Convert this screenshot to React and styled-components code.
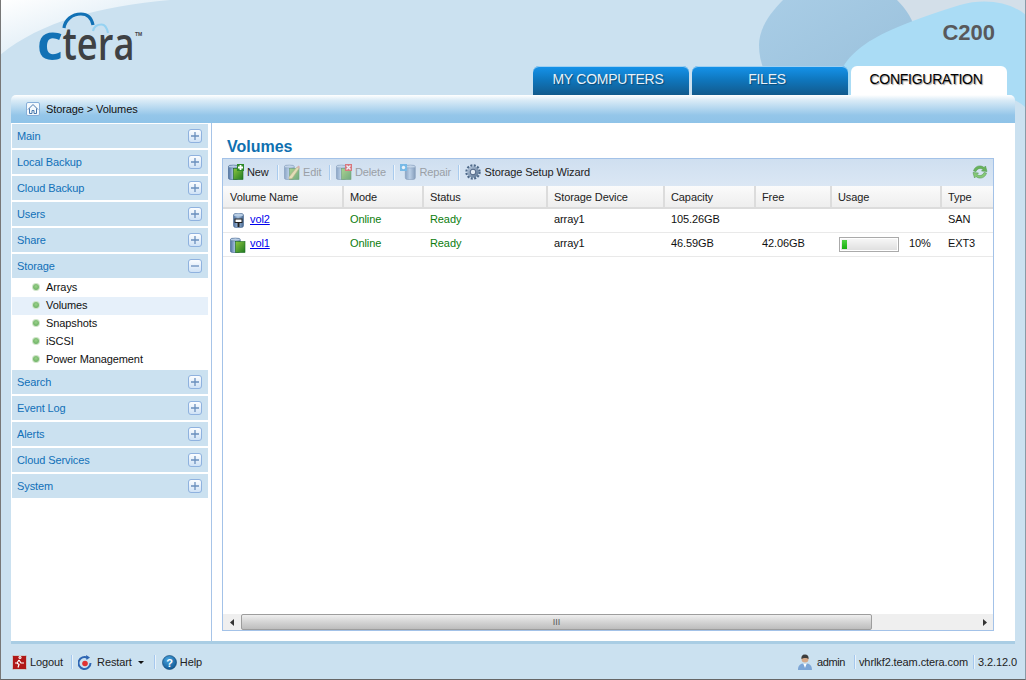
import React from "react";
import styled, { createGlobalStyle } from "styled-components";

const Global = createGlobalStyle`
  html, body { margin: 0; padding: 0; height: 100%; overflow: hidden; }
  body { font-family: "Liberation Sans", Arial, sans-serif; font-size: 11px; letter-spacing: -0.1px; color: #111; }
  * { box-sizing: border-box; }
`;

const Shell = styled.div`
  position: relative; width: 1026px; height: 680px; overflow: hidden;
  background: #cbe1f0;
  border-left: 1px solid #777; border-right: 1px solid #8a9aa6; border-bottom: 1px solid #666;
  display: flex; flex-direction: column;
`;
const Backdrop = styled.svg`position: absolute; left: -1px; top: 0; width: 1026px; height: 135px;`;
const Header = styled.header`
  position: relative; height: 95px; flex: none;
  padding: 0 7px 0 532px;
  display: flex; align-items: flex-end; gap: 3px;
`;
const Logo = styled.svg`position: absolute; left: 29px; top: 0; width: 121px; height: 76px; letter-spacing: 0;`;
const Model = styled.div`
  position: absolute; right: 30px; top: 20px; letter-spacing: 0;
  font-size: 22px; line-height: 26px; font-weight: 700; color: #58595b;
`;
const Tab = styled.div`
  width: 156px; height: 29px; border-radius: 6px 6px 0 0;
  padding: 5px 6px 0 0; text-align: center; font-size: 14px; line-height: 17px; letter-spacing: -0.25px;
  margin-right: ${p => (p.$last ? "8px" : "0")};
  color: ${p => (p.$active ? "#000" : "#e8f2fa")};
  background: ${p => (p.$active ? "#fff" : "linear-gradient(#1594ec, #0f75bb 50%, #125a8c)")};
  box-shadow: ${p => (p.$active ? "none" : "inset 0 1px 0 #9fd0f2")};
  text-shadow: ${p => (p.$active ? "1px 1px 1px #999" : "1px 1px 1px #0b4a75")};
`;
const Crumb = styled.div`
  position: relative; height: 28px; flex: none; margin: 0 10px 0 10px;
  border-radius: 5px 5px 0 0;
  background: linear-gradient(#fff 0, #d8eaf6 20%, #94c6e9 72%, #8fc3e8 100%);
  display: flex; align-items: center; padding-left: 15px; gap: 6px; color: #111;
`;
const HomeBox = styled.span`
  width: 14px; height: 14px; display: flex; align-items: center; justify-content: center;
  background: #f4f9fd; border: 1px solid #86aed8; border-radius: 2px;
`;
const Main = styled.main`
  position: relative; height: 518px; flex: none; margin: 0 10px;
  background: #fff; display: flex;
`;
const Side = styled.nav`
  width: 201px; flex: none; padding: 1px 3px 0 1px;
  border-right: 1px solid #a7c4e8; display: flex; flex-direction: column;
`;
const Group = styled.div`
  height: 24px; margin-bottom: ${p => (p.$open ? "1px" : "2px")}; flex: none;
  background: #cbe1f0; color: #1170b8; padding: 0 6px 0 5px;
  display: flex; align-items: center; justify-content: space-between;
`;
const Toggle = styled.span`
  width: 14px; height: 14px; border: 1px solid #8fb2df; border-radius: 3px;
  background: linear-gradient(#fbfdff, #cfe2f6); display: flex; align-items: center; justify-content: center;
`;
const Sub = styled.div`
  height: 18px; flex: none; display: flex; align-items: center; padding: 0 0 2px 21px; gap: 7px;
  background: ${p => (p.$on ? "#e6f0fa" : "transparent")};
  margin-bottom: ${p => (p.$end ? "1px" : "0")};
`;
const Dot = styled.span`
  width: 6px; height: 6px; border-radius: 50%;
  background: radial-gradient(circle at 50% 40%, #9ad08a, #5ea858);
  box-shadow: 0 0 0 1px #cfe4c8;
`;
const Content = styled.section`
  flex: 1; min-width: 0; padding: 0 21px 10px 10px; display: flex; flex-direction: column;
`;
const Title = styled.h1`
  margin: 14px 0 0 5px; height: 21px; font-size: 16px; line-height: 19px; font-weight: 700; color: #0f70b0; letter-spacing: 0;
`;
const Grid = styled.div`
  flex: 1; min-height: 0; border: 1px solid #a3c2e8; display: flex; flex-direction: column;
`;
const Toolbar = styled.div`
  height: 27px; flex: none; padding: 0 5px 1px; background: linear-gradient(#cfdff0, #dbe7f4);
  display: flex; align-items: center;
`;
const ToolBtn = styled.span`
  display: flex; align-items: center; gap: 3px;
  padding-right: ${p => p.$pr || 0}px;
  color: ${p => (p.$off ? "#9a9fa6" : "#222")};
`;
const ToolSep = styled.span`
  width: 1px; height: 15px; margin: 0 6.3px 0 7px; background: #a9cbee; box-shadow: 1px 0 0 #eef5fb;
`;
const Spacer = styled.span`flex: 1;`;
const Refresh = styled.svg`width: 16px; height: 16px;`;
const Columns = "121px 80px 124px 117px 91px 76px 110px 1fr";
const HeadRow = styled.div`
  height: 23px; flex: none; display: grid; grid-template-columns: ${Columns};
  background: linear-gradient(#fbfbfb, #eeeeee); border-bottom: 2px solid #dcdcdc;
`;
const HeadCell = styled.div`
  padding-left: ${p => (p.$first ? "7px" : "6px")}; line-height: 22px; color: #222;
  border-right: ${p => (p.$last ? "0" : "2px solid #dcdcdc")};
`;
const Row = styled.div`
  height: 24px; flex: none; display: grid; grid-template-columns: ${Columns};
  border-bottom: 1px solid #e9e9e9; align-items: center;
`;
const Cell = styled.div`
  padding: 0 0 4px 6px; color: ${p => (p.$green ? "#0d7d0d" : "#111")};
  display: flex; align-items: center;
`;
const NameCell = styled.div`padding-left: 7px; display: flex; align-items: center; gap: 4px;`;
const IconSlot = styled.span`width: 16px; height: 16px; display: flex; justify-content: center; align-items: center;`;
const VolLink = styled.a`color: #0000ee; text-decoration: underline; margin-bottom: 4px;`;
const Usage = styled.div`
  display: flex; align-items: center; padding-left: 7px; gap: 10px;
`;
const Bar = styled.div`
  width: 60px; height: 15px; border: 1px solid #aaa; padding: 2px;
  background: linear-gradient(#f8f8f8, #dedede); box-shadow: inset 0 0 0 1px #fff;
`;
const Fill = styled.div`height: 100%; background: linear-gradient(#4fd043, #16b00d);`;
const Pct = styled.span`width: 21px; text-align: right; margin-bottom: 3px;`;
const GridBody = styled.div`flex: 1;`;
const Scroll = styled.div`
  height: 16px; flex: none; background: #efefef; display: flex; align-items: center;
`;
const ScrollBtn = styled.span`width: 18px; display: flex; justify-content: center; flex: none;`;
const Thumb = styled.div`
  width: 631px; height: 16px; flex: none; border: 1px solid #9d9d9d; border-radius: 2px;
  background: linear-gradient(#efefef, #d4d4d4 50%, #bdbdbd); display: flex; align-items: center; justify-content: center;
  font-size: 9px; color: #555; letter-spacing: 0;
`;
const ScrollGap = styled.span`flex: 1;`;
const Stripe = styled.div`height: 3px; flex: none; margin: 0 10px; background: #a9cde4;`;
const Footer = styled.footer`
  flex: 1; padding: 1px 8px 0 11px; display: flex; align-items: center; color: #222;
`;
const FootItem = styled.span`display: flex; align-items: center; gap: ${p => p.$gap || 3}px;`;
const FootSep = styled.span`
  width: 1px; height: 14px; margin: 0 ${p => p.$r}px 0 ${p => p.$l}px; background: #a6c8ee; box-shadow: 1px 0 0 #e8f2fa;
`;
const Caret = styled.span`
  width: 0; height: 0; margin-left: 1px; border: 3px solid transparent; border-top: 3px solid #111; border-bottom: 0;
`;
const UserName = styled.span`letter-spacing: -0.4px;`;
const Defs = styled.svg`position: absolute; width: 0; height: 0;`;

const VolumeDefs = () => (
  <Defs>
    <defs>
      <linearGradient id="cyl" x1="0" x2="1" y1="0" y2="0">
        <stop offset="0" stopColor="#4c6f9e" />
        <stop offset=".45" stopColor="#a3bedd" />
        <stop offset="1" stopColor="#44658f" />
      </linearGradient>
      <linearGradient id="grn" x1="0" x2="1" y1="0" y2="1">
        <stop offset="0" stopColor="#8cc63f" />
        <stop offset="1" stopColor="#1f7a22" />
      </linearGradient>
      <linearGradient id="gear" x1="0" x2="1" y1="0" y2="1">
        <stop offset="0" stopColor="#b9cbe0" />
        <stop offset="1" stopColor="#56708f" />
      </linearGradient>
      <radialGradient id="help" cx=".4" cy=".3" r=".8">
        <stop offset="0" stopColor="#4aa5e0" />
        <stop offset="1" stopColor="#0a4f8c" />
      </radialGradient>
    </defs>
  </Defs>
);

const Cylinder = ({ x = 0, w = 10 }) => (
  <g>
    <rect x={x + 0.3} y="1.500" width={w} height="14" rx="2" fill="url(#cyl)" stroke="#44658f" strokeWidth=".6" />
    <ellipse cx={x + w / 2 + 0.3} cy="2.500" rx={w / 2} ry="1.500" fill="#b8cde4" stroke="#44658f" strokeWidth=".5" />
  </g>
);

const VolIcon = ({ badge, faded }) => (
  <svg width="16" height="16" viewBox="0 0 16 16" opacity={faded ? 0.55 : 1}>
    <Cylinder x={badge === "gearbox" ? 5 : 0} />
    {badge !== "gearbox" && (
      <rect x="5.500" y="4.500" width="9.500" height="11" fill="url(#grn)" stroke="#1c6b20" strokeWidth=".6" />
    )}
    {badge === "plus" && (
      <g>
        <rect x="9" y="0" width="7" height="7" fill="#2f8a2a" />
        <path d="M12.500 1v5M10 3.500h5" stroke="#fff" strokeWidth="1.800" />
      </g>
    )}
    {badge === "x" && (
      <g>
        <rect x="9" y="0" width="7" height="7" fill="#d22" />
        <path d="M10.500 1.500l4 4M14.500 1.500l-4 4" stroke="#fff" strokeWidth="1.400" />
      </g>
    )}
    {badge === "pencil" && (
      <g>
        <path d="M5 13L13 3l2 1.500L8 14.500 5 15z" fill="#f2d98a" stroke="#a8893a" strokeWidth=".6" />
        <path d="M13 3l1.500-1.500L16 3l-1 1.500z" fill="#d98a7a" />
      </g>
    )}
    {badge === "gearbox" && (
      <g>
        <rect x="0" y="0" width="7" height="7" fill="#2f9ade" />
        <circle cx="3.500" cy="3.500" r="1.700" fill="#fff" />
      </g>
    )}
  </svg>
);

const SanIcon = () => (
  <svg width="11" height="15" viewBox="0 0 11 15">
    <rect x=".5" y=".5" width="10" height="14" rx="2" fill="url(#cyl)" stroke="#44658f" strokeWidth=".6" />
    <ellipse cx="5.500" cy="2" rx="4.500" ry="1.500" fill="#b8cde4" />
    <rect x="2" y="6" width="7" height="3.500" fill="#fff" stroke="#222" />
    <path d="M5.500 9.500v4.500" stroke="#222" strokeWidth="2" />
  </svg>
);

const Gear = () => (
  <svg width="16" height="16" viewBox="0 0 16 16">
    <circle cx="8" cy="8" r="6.500" fill="none" stroke="#4f6a8a" strokeWidth="2.400" strokeDasharray="2 1.400" />
    <circle cx="8" cy="8" r="5.800" fill="url(#gear)" />
    <circle cx="8" cy="8" r="2.800" fill="#e3ecf5" stroke="#43597a" strokeWidth=".9" />
  </svg>
);

const Plus = ({ minus }) => (
  <svg width="8" height="8" viewBox="0 0 8 8">
    <path d={minus ? "M0 4h8" : "M0 4h8M4 0v8"} stroke="#6a8fbd" strokeWidth="1.300" />
  </svg>
);

const groupsTop = ["Main", "Local Backup", "Cloud Backup", "Users", "Share"];
const subs = ["Arrays", "Volumes", "Snapshots", "iSCSI", "Power Management"];
const groupsEnd = ["Search", "Event Log", "Alerts", "Cloud Services", "System"];
const heads = ["Volume Name", "Mode", "Status", "Storage Device", "Capacity", "Free", "Usage", "Type"];

export default function App() {
  return (
    <Shell>
      <Global />
      <VolumeDefs />
      <Backdrop viewBox="0 0 1026 135">
        <defs>
          <linearGradient id="corner" x1="0" y1="0" x2="1" y2="1">
            <stop offset="0" stopColor="#fff" />
            <stop offset="1" stopColor="#cbe1f0" />
          </linearGradient>
          <linearGradient id="blob" x1="0" y1="0" x2="1" y2="1">
            <stop offset="0" stopColor="#a9cde6" />
            <stop offset="1" stopColor="#98bfda" />
          </linearGradient>
        </defs>
        <path d="M0 0H170C100 6 40 22 0 55z" fill="url(#corner)" />
        <path d="M895 0H1026V20H895z" fill="#d3dfe9" />
        <path d="M783 0C768 15 759 30 759 45C759 65 768 82 780 95H860C890 80 915 60 915 35C915 20 905 8 897 0z" fill="url(#blob)" />
        <path d="M837 95C835 50 880 30 960 5C985 -2 1010 2 1026 15V108C1022 104 1018 100 1000 95z" fill="#aadcf5" />
      </Backdrop>
      <Header>
        <Logo viewBox="0 0 121 76">
          <path d="M34 28C35 20 42 14 51 14C59 14 62 20 63 25" fill="none" stroke="#1271b5" strokeWidth="3.200" />
          <path d="M63 31C64 26 68 24.500 71.500 24.500C75 24.500 77 28 78 33" fill="none" stroke="#96d2f2" strokeWidth="2.200" />
          <text x="7" y="60" fontFamily="'Open Sans', sans-serif" fontSize="48" fontWeight="700" fill="#1271b5" textLength="26" lengthAdjust="spacingAndGlyphs">c</text>
          <text x="32.500" y="60" fontFamily="'Open Sans', sans-serif" fontSize="45" fontWeight="600" fill="#3f4144" textLength="72" lengthAdjust="spacingAndGlyphs">tera</text>
          <text x="105" y="36" fontFamily="'Liberation Sans', sans-serif" fontSize="5" fontWeight="700" fill="#3f4144">TM</text>
        </Logo>
        <Model>C200</Model>
        <Tab>MY COMPUTERS</Tab>
        <Tab>FILES</Tab>
        <Tab $active $last>CONFIGURATION</Tab>
      </Header>
      <Crumb>
        <HomeBox>
          <svg width="12" height="12" viewBox="0 0 12 12">
            <path d="M1 6.500L6 1.500l5 5M2.500 5.500V10.500h2.500V7.500h2V10.500h2.500V5.500" fill="none" stroke="#4a78ad" strokeWidth="1" />
          </svg>
        </HomeBox>
        Storage &gt; Volumes
      </Crumb>
      <Main>
        <Side>
          {groupsTop.map(g => (
            <Group key={g}>{g}<Toggle><Plus /></Toggle></Group>
          ))}
          <Group $open>Storage<Toggle><Plus minus /></Toggle></Group>
          {subs.map((s, i) => (
            <Sub key={s} $on={s === "Volumes"} $end={i === subs.length - 1}><Dot />{s}</Sub>
          ))}
          {groupsEnd.map(g => (
            <Group key={g}>{g}<Toggle><Plus /></Toggle></Group>
          ))}
        </Side>
        <Content>
          <Title>Volumes</Title>
          <Grid>
            <Toolbar>
              <ToolBtn $pr={1}><VolIcon badge="plus" />New</ToolBtn>
              <ToolSep />
              <ToolBtn $off><VolIcon badge="pencil" faded />Edit</ToolBtn>
              <ToolSep />
              <ToolBtn $off><VolIcon badge="x" faded />Delete</ToolBtn>
              <ToolSep />
              <ToolBtn $off><VolIcon badge="gearbox" faded />Repair</ToolBtn>
              <ToolSep />
              <ToolBtn><Gear />Storage Setup Wizard</ToolBtn>
              <Spacer />
              <Refresh viewBox="0 0 16 16">
                <path d="M1.500 7C2.500 3 6 1.500 9 2c1.300.2 2.300.8 3 1.500L13.500 2l1.500 5.500-5.500-.5 1.500-1.500C9 3.800 5.500 4 4 7.500z" fill="#69b35c" stroke="#4b9448" strokeWidth=".5" />
                <path d="M14.500 9C13.500 13 10 14.500 7 14c-1.300-.2-2.300-.8-3-1.500L2.500 14 1 8.500l5.500.5L5 10.500c2 1.700 5.500 1.500 7-2z" fill="#86c878" stroke="#4b9448" strokeWidth=".5" />
              </Refresh>
            </Toolbar>
            <HeadRow>
              {heads.map((h, i) => (
                <HeadCell key={h} $first={i === 0} $last={i === heads.length - 1}>{h}</HeadCell>
              ))}
            </HeadRow>
            <Row>
              <NameCell><IconSlot><SanIcon /></IconSlot><VolLink href="#">vol2</VolLink></NameCell>
              <Cell $green>Online</Cell>
              <Cell $green>Ready</Cell>
              <Cell>array1</Cell>
              <Cell>105.26GB</Cell>
              <Cell />
              <Cell />
              <Cell>SAN</Cell>
            </Row>
            <Row>
              <NameCell><IconSlot><VolIcon /></IconSlot><VolLink href="#">vol1</VolLink></NameCell>
              <Cell $green>Online</Cell>
              <Cell $green>Ready</Cell>
              <Cell>array1</Cell>
              <Cell>46.59GB</Cell>
              <Cell>42.06GB</Cell>
              <Usage><Bar><Fill style={{ width: "10%" }} /></Bar><Pct>10%</Pct></Usage>
              <Cell>EXT3</Cell>
            </Row>
            <GridBody />
            <Scroll>
              <ScrollBtn>
                <svg width="5" height="7" viewBox="0 0 5 7"><path d="M4 0v7L0 3.500z" fill="#333" /></svg>
              </ScrollBtn>
              <Thumb>III</Thumb>
              <ScrollGap />
              <ScrollBtn>
                <svg width="5" height="7" viewBox="0 0 5 7"><path d="M1 0v7l4-3.500z" fill="#333" /></svg>
              </ScrollBtn>
            </Scroll>
          </Grid>
        </Content>
      </Main>
      <Stripe />
      <Footer>
        <FootItem>
          <svg width="15" height="15" viewBox="0 0 15 15">
            <rect x=".5" y=".5" width="14" height="14" rx="1" fill="#b01818" stroke="#c9c9c9" />
            <path d="M8 3.500a1 1 0 1 1 .01 0M7 5L5 8l2 1.500-1 3M7 5l2 3h3M5 8H3" fill="none" stroke="#fff" strokeWidth="1.200" />
          </svg>
          Logout
        </FootItem>
        <FootSep $l={8} $r={6} />
        <FootItem $gap={5}>
          <svg width="14" height="15" viewBox="0 0 14 15">
            <path d="M9.500 2.800A6 6 0 1 0 12.500 8" fill="none" stroke="#2f66b3" strokeWidth="2" />
            <path d="M8 0l4 2.500L8.500 5z" fill="#2f66b3" />
            <circle cx="7" cy="8.500" r="2.800" fill="#e03232" />
          </svg>
          Restart
          <Caret />
        </FootItem>
        <FootSep $l={10} $r={7} />
        <FootItem>
          <svg width="15" height="15" viewBox="0 0 15 15">
            <circle cx="7.500" cy="7.500" r="7" fill="url(#help)" stroke="#0a3f6e" strokeWidth=".6" />
            <text x="7.500" y="11.500" textAnchor="middle" fontSize="11" fontWeight="700" fontFamily="'Liberation Sans', sans-serif" fill="#fff">?</text>
          </svg>
          Help
        </FootItem>
        <Spacer />
        <FootItem $gap={5}>
          <svg width="14" height="16" viewBox="0 0 14 16">
            <path d="M0 16c0-4 2-6 4.500-6.500L7 11l2.500-1.500C12 10 14 12 14 16z" fill="#7da6d6" />
            <path d="M5.500 10L7 14l1.500-4z" fill="#fff" />
            <circle cx="7" cy="5" r="3.500" fill="#d6a988" />
            <path d="M3.500 5C3 1 6 .5 7 .5s4 .5 3.500 4.500C9.500 3.500 5 3.500 3.500 5z" fill="#3d3d3d" />
          </svg>
          <UserName>admin</UserName>
        </FootItem>
        <FootSep $l={9} $r={4} />
        <span>vhrlkf2.team.ctera.com</span>
        <FootSep $l={5} $r={4} />
        <span>3.2.12.0</span>
      </Footer>
    </Shell>
  );
}
